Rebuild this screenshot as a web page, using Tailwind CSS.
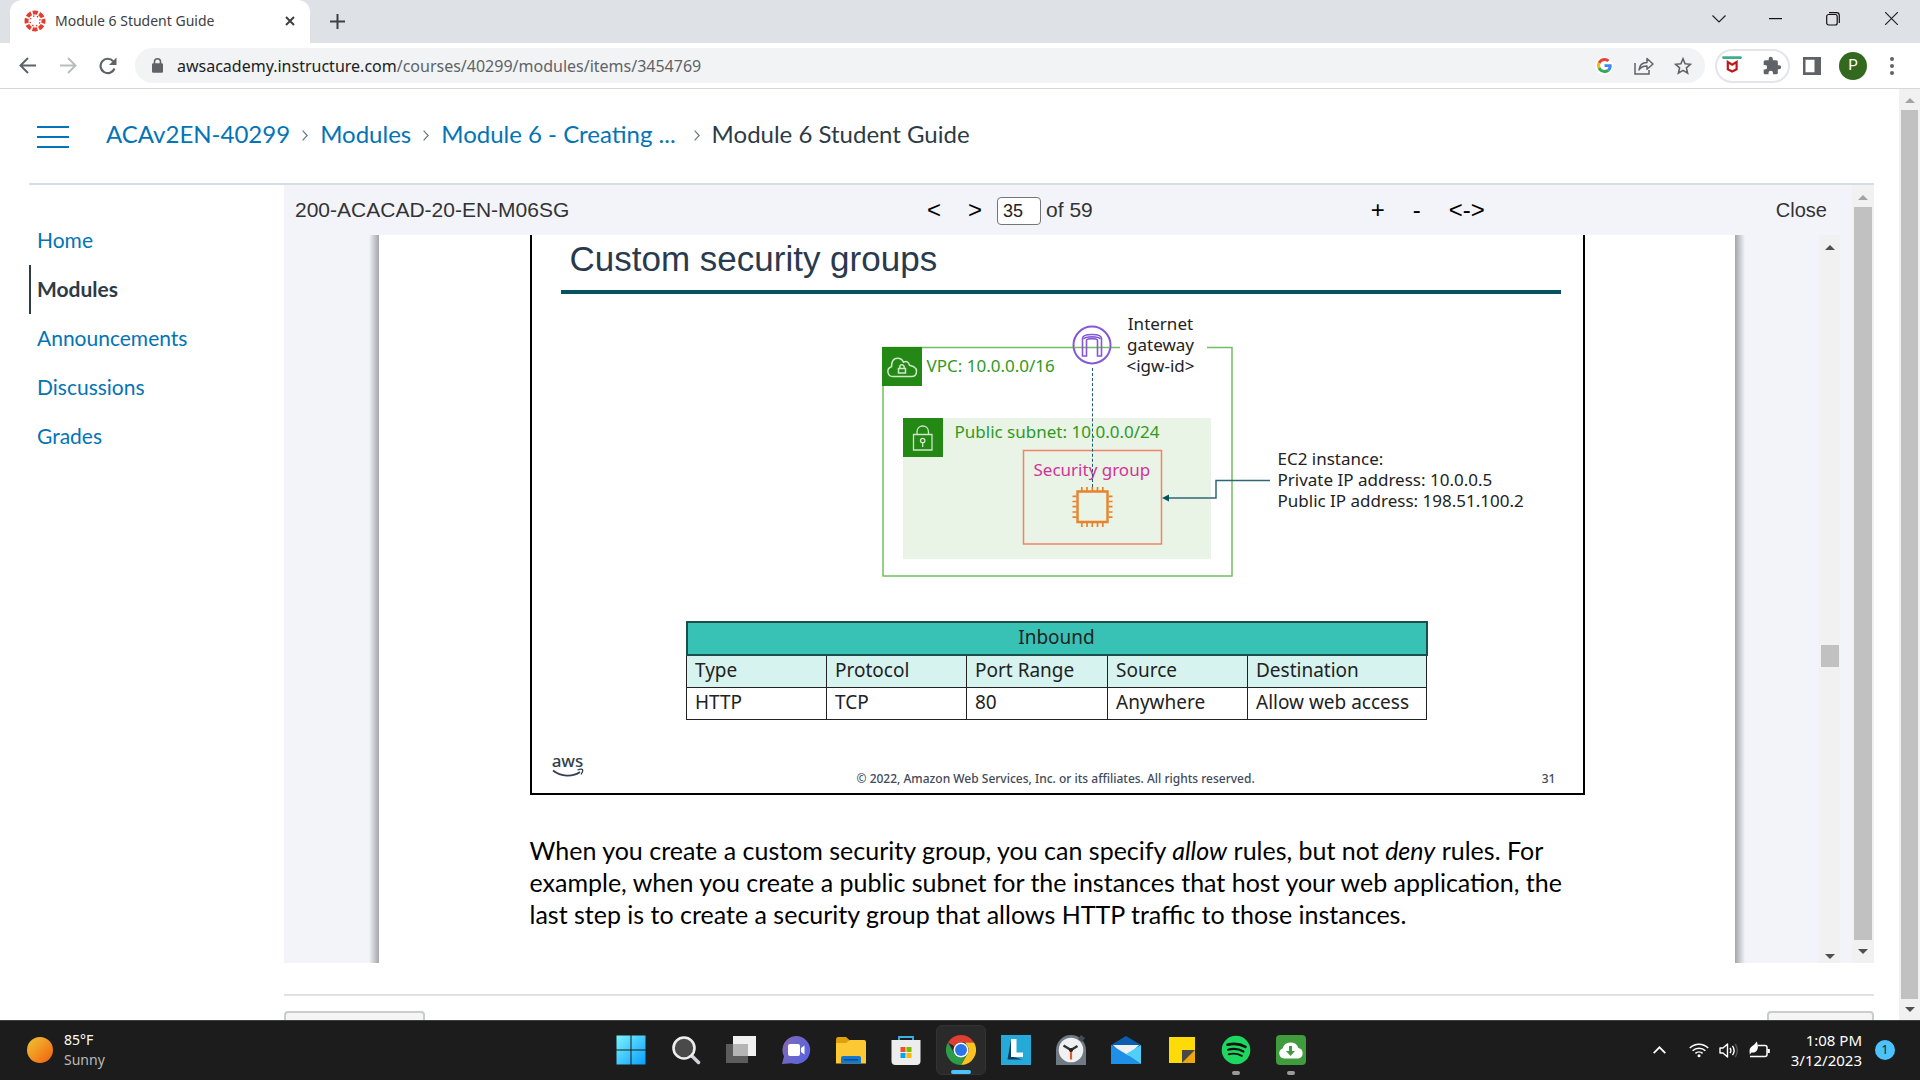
<!DOCTYPE html>
<html lang="en">
<head>
<meta charset="utf-8">
<title>Module 6 Student Guide</title>
<script src="https://cdn.jsdelivr.net/npm/@tailwindcss/browser@4"></script>
</head>
<body class="flex h-screen flex-col overflow-hidden bg-white font-['Noto_Sans','Open_Sans',sans-serif] text-[#202124]">

<!-- Tab strip -->
<header class="shrink-0">
  <div class="flex h-[43px] bg-[#dee1e6] pl-[10px]">
    <div class="flex w-[300px] items-center rounded-t-xl bg-white pr-[12px] pb-[2px] pl-[14px]">
      <svg class="size-[22px]" viewBox="0 0 22 22" fill="none">
        <circle cx="11" cy="11" r="8.5" stroke="#e43d30" stroke-width="4" stroke-dasharray="5 1.68" stroke-dashoffset="2.5"/>
        <circle cx="11" cy="11" r="5" stroke="#e43d30" stroke-width="1.4" stroke-dasharray="1.4 2.53" stroke-dashoffset="-1.3"/>
      </svg>
      <span class="ml-[9px] flex-1 text-[14px] text-[#3c4043]">Module 6 Student Guide</span>
      <button aria-label="Close tab" class="grid size-4 place-items-center"><svg class="size-[10px]" viewBox="0 0 10 10" stroke="#3c4043" stroke-width="2"><path d="M1 1l8 8M9 1L1 9"/></svg></button>
    </div>
    <button aria-label="New tab" class="ml-[19px] grid w-4 place-items-center"><svg class="size-[15px]" viewBox="0 0 15 15" stroke="#3c4043" stroke-width="2"><path d="M7.500 0v15M0 7.500h15"/></svg></button>
    <div class="ml-auto flex h-[37px]">
      <button aria-label="Search tabs" class="grid w-[57px] place-items-center"><svg class="h-[8px] w-[14px]" viewBox="0 0 14 8" fill="none" stroke="#222" stroke-width="1.200"><path d="M.5.5L7 7l6.500-6.500"/></svg></button>
      <button aria-label="Minimize" class="grid w-[57px] place-items-center"><svg class="h-[2px] w-[13px]" viewBox="0 0 13 2"><path fill="#111" d="M0 0h13v1.200H0z"/></svg></button>
      <button aria-label="Restore" class="grid w-[58px] place-items-center"><svg class="size-[14px]" viewBox="0 0 14 14" fill="none" stroke="#111" stroke-width="1.200"><rect x=".7" y="2.500" width="10.500" height="10.500" rx="2"/><path d="M3 .7h7.500a2.800 2.800 0 0 1 2.800 2.800V11"/></svg></button>
      <button aria-label="Close window" class="grid w-[58px] place-items-center"><svg class="size-[13px]" viewBox="0 0 13 13" stroke="#222" stroke-width="1.200"><path d="M0 0l13 13M13 0L0 13"/></svg></button>
    </div>
  </div>
  <!-- Address bar -->
  <div class="flex h-[46px] items-center border-b border-[#d5d7da] pl-[18px]">
    <button aria-label="Back" class="grid size-[18px] place-items-center"><svg class="size-[17px]" viewBox="0 0 17 17" fill="none" stroke="#5f6368" stroke-width="2"><path d="M17 8.500H2M9 1L1.500 8.500 9 16"/></svg></button>
    <button aria-label="Forward" class="ml-[23px] grid size-[18px] place-items-center"><svg class="size-[17px]" viewBox="0 0 17 17" fill="none" stroke="#babcbe" stroke-width="2"><path d="M0 8.500h15M8 1l7.500 7.500L8 16"/></svg></button>
    <button aria-label="Reload" class="ml-[22px] grid size-[18px] place-items-center"><svg class="size-[18px]" viewBox="0 0 18 18" fill="none" stroke="#5f6368" stroke-width="2.200"><path d="M15.500 11.500A7.200 7.200 0 1 1 14.200 4.200"/><path fill="#5f6368" stroke="none" d="M17.500.5v7.500H10z"/></svg></button>
    <div class="ml-[18px] flex h-[35px] flex-1 items-center rounded-full bg-[#f1f3f4] pr-[13px] pl-[17px]">
      <svg class="h-[15px] w-[11px]" viewBox="0 0 11 15"><path fill="#5f6368" d="M1.200 5.300h8.600A1.200 1.200 0 0 1 11 6.500v7a1.200 1.200 0 0 1-1.200 1.200H1.200A1.200 1.200 0 0 1 0 13.500v-7a1.200 1.200 0 0 1 1.200-1.200z"/><path fill="none" stroke="#5f6368" stroke-width="1.600" d="M2.500 6V3.800a3 3 0 0 1 6 0V6"/></svg>
      <a href="#" class="ml-[14px] flex-1 text-[16px] text-[#5f6368]"><span class="text-[#202124]">awsacademy.instructure.com</span>/courses/40299/modules/items/3454769</a>
      <button aria-label="Google" class="grid size-[18px] place-items-center rounded-full bg-white"><svg class="size-[15px]" viewBox="0 0 48 48"><path fill="#EA4335" d="M24 9.500c3.540 0 6.710 1.220 9.210 3.600l6.850-6.850C35.900 2.380 30.470 0 24 0 14.620 0 6.510 5.380 2.560 13.220l7.980 6.190C12.430 13.720 17.740 9.500 24 9.500z"/><path fill="#4285F4" d="M46.980 24.550c0-1.570-.15-3.090-.38-4.550H24v9.020h12.940c-.58 2.960-2.260 5.480-4.780 7.180l7.730 6c4.510-4.180 7.090-10.360 7.090-17.650z"/><path fill="#FBBC05" d="M10.530 28.590a14.500 14.500 0 0 1 0-9.180l-7.980-6.190a24 24 0 0 0 0 21.560z"/><path fill="#34A853" d="M24 48c6.480 0 11.930-2.130 15.890-5.810l-7.730-6c-2.150 1.450-4.920 2.300-8.160 2.300-6.260 0-11.570-4.220-13.470-9.910l-7.980 6.190C6.510 42.620 14.620 48 24 48z"/></svg></button>
      <button aria-label="Share" class="ml-[21px] grid size-[20px] place-items-center"><svg class="h-[18px] w-[20px]" viewBox="0 0 20 18" fill="none" stroke="#5f6368" stroke-width="1.500"><path d="M1 6v11h14v-4"/><path stroke-linejoin="round" d="M5 13c.5-5 3.500-7.500 8-7.500V1.500L19 7l-6 5.300V9c-4 0-6.300 1-8 4z"/></svg></button>
      <button aria-label="Bookmark" class="ml-[20px] grid size-[18px] place-items-center"><svg class="size-[18px]" viewBox="0 0 18 18" fill="none" stroke="#5f6368" stroke-width="1.600"><path d="M9 1.800l2.100 5 5.400.5-4.100 3.600 1.200 5.300L9 13.400l-4.600 2.800 1.200-5.300L1.500 7.300l5.400-.5z"/></svg></button>
    </div>
    <div class="mx-[10px] flex h-[34px] w-[75px] items-center justify-between rounded-full border-2 border-[#e3e5e8] pr-[6px] pl-[5px]">
      <svg class="size-[20px]" viewBox="0 0 20 20" fill="none"><path stroke="#3fae8c" stroke-width="2.800" stroke-linecap="round" d="M1.500 1.600h17"/><path stroke="#c01818" stroke-width="2.200" d="M5.800 6v7.200l4.400 2.200 4.400-2.200V6l-4.400 2.700z"/></svg>
      <svg class="size-[20px]" viewBox="0 0 24 24" fill="#5f6368"><path d="M20.500 11H19V7c0-1.100-.9-2-2-2h-4V3.500a2.500 2.500 0 0 0-5 0V5H4c-1.100 0-2 .9-2 2v3.800h1.500a2.700 2.700 0 0 1 0 5.400H2V20c0 1.100.9 2 2 2h3.800v-1.500a2.700 2.700 0 0 1 5.400 0V22H17c1.100 0 2-.9 2-2v-4h1.500a2.500 2.500 0 0 0 0-5z"/></svg>
    </div>
    <button aria-label="Side panel" class="ml-[3px] grid size-[18px] place-items-center"><svg class="size-[18px]" viewBox="0 0 18 18"><path fill="#5f6368" fill-rule="evenodd" d="M0 0h18v18H0zM2.500 2.800v12.400h9V2.800z"/></svg></button>
    <button class="ml-[18px] grid size-[28px] place-items-center rounded-full bg-[#33691e] font-['Roboto',sans-serif] text-[15px] text-white">P</button>
    <button aria-label="Menu" class="mr-[23px] ml-[20px] flex w-[10px] flex-col items-center gap-[3px]"><span class="size-[4px] rounded-full bg-[#5f6368]"></span><span class="size-[4px] rounded-full bg-[#5f6368]"></span><span class="size-[4px] rounded-full bg-[#5f6368]"></span></button>
  </div>
</header>

<!-- Web page -->
<div class="flex min-h-0 flex-1">
  <div class="flex min-w-0 flex-1 flex-col pr-[25px] pl-[29px]">
    <div class="flex h-[96px] shrink-0 items-center border-b-2 border-[#d7dde1] pl-[8px] font-['Lato',sans-serif] text-[24px]">
      <button aria-label="Course navigation menu" class="flex w-[32px] flex-col gap-[8px] pt-[2px]"><span class="h-[2px] bg-[#0374b5]"></span><span class="h-[2px] bg-[#0374b5]"></span><span class="h-[2px] bg-[#0374b5]"></span></button>
      <nav aria-label="Breadcrumb" class="ml-[37px] flex items-center gap-[12px] pb-[5px] text-[#0374b5]">
        <a href="#">ACAv2EN-40299</a>
        <svg class="mt-[4px] h-[11px] w-[6px]" viewBox="0 0 6 11" fill="none" stroke="#6b7780" stroke-width="1.200"><path d="M.6.6L5.200 5.500.6 10.400"/></svg>
        <a href="#">Modules</a>
        <svg class="mt-[4px] h-[11px] w-[6px]" viewBox="0 0 6 11" fill="none" stroke="#6b7780" stroke-width="1.200"><path d="M.6.6L5.200 5.500.6 10.400"/></svg>
        <a href="#" class="pr-[6px]">Module 6 - Creating ...</a>
        <svg class="mt-[4px] h-[11px] w-[6px]" viewBox="0 0 6 11" fill="none" stroke="#6b7780" stroke-width="1.200"><path d="M.6.6L5.200 5.500.6 10.400"/></svg>
        <span class="text-[#2d3b45]">Module 6 Student Guide</span>
      </nav>
    </div>

    <div class="flex min-h-0 flex-1">
      <nav aria-label="Course" class="w-[255px] shrink-0 pt-[32px] font-['Lato',sans-serif] text-[21px] text-[#0374b5]">
        <a href="#" class="flex h-[48px] items-center border-l-2 border-transparent pb-[2px] pl-[6px]">Home</a>
        <a href="#" class="flex h-[49px] items-center border-l-2 border-[#2d3b45] pb-[2px] pl-[6px] font-bold text-[#2d3b45]">Modules</a>
        <a href="#" class="flex h-[49px] items-center border-l-2 border-transparent pb-[2px] pl-[6px]">Announcements</a>
        <a href="#" class="flex h-[49px] items-center border-l-2 border-transparent pb-[2px] pl-[6px]">Discussions</a>
        <a href="#" class="flex h-[49px] items-center border-l-2 border-transparent pb-[2px] pl-[6px]">Grades</a>
      </nav>

      <div class="flex min-w-0 flex-1 flex-col">
        <div class="flex min-h-0 flex-1 bg-[#f3f4f9]">
          <!-- Document viewer -->
          <main class="flex min-w-0 flex-1 flex-col">
            <div class="flex h-[50px] shrink-0 items-center pr-[13px] pl-[11px] font-['Liberation_Sans',sans-serif] text-[21px] text-[#333]">
              <span class="w-[632px]">200-ACACAD-20-EN-M06SG</span>
              <button aria-label="Previous page" class="text-[24px] text-black">&lt;</button>
              <button aria-label="Next page" class="ml-[27px] text-[24px] text-black">&gt;</button>
              <input aria-label="Page" value="35" class="mt-[2px] ml-[15px] h-[28px] w-[44px] rounded-sm border border-[#767676] bg-white pl-[5px] text-[18px] text-[#222]">
              <span class="ml-[5px]">of 59</span>
              <div class="mr-[291px] ml-auto flex gap-[28px] text-[24px] text-black">
                <button aria-label="Zoom in">+</button>
                <button aria-label="Zoom out">-</button>
                <button aria-label="Fit width">&lt;-&gt;</button>
              </div>
              <button class="text-[20px]">Close</button>
            </div>
            <div class="flex min-h-0 flex-1 overflow-hidden">
              <div class="ml-[85px] w-[10px] bg-linear-to-r from-[#f3f4f9] to-[#a4a5a9]"></div>
              <article class="flex-1 bg-white">
                <!-- Slide -->
                <section class="mx-auto flex h-[560px] w-[1055px] flex-col border-x-2 border-b-2 border-black font-['Noto_Sans',sans-serif]">
                  <h1 class="mr-[22px] ml-[29px] flex h-[59px] items-center border-b-4 border-[#04535f] px-[9px] pb-[7px] font-['Liberation_Sans',sans-serif] text-[35px] text-[#2a3a4e]">Custom security groups</h1>
                  <!-- Network diagram -->
                  <div class="relative h-[327px] text-[17px] leading-[21px]">
                    <svg class="absolute top-0 left-0 h-[328px] w-[1051px]" viewBox="532 294 1051 328" fill="none">
                      <path stroke="#74bd62" stroke-width="1.500" d="M1120 347.500H883V576h349V347.500h-25"/>
                      <path fill="#248814" d="M882 347h40v39h-40z"/>
                      <g stroke="#cfe6cb" stroke-width="1.500"><path d="M893 376.500a5 5 0 0 1-1.500-9.800c0-6 2.500-8.500 6-8.500 3 0 5 1.500 6 4 3-1.500 5-.5 6 3 3.500 1 7 2 7 6s-2.500 5.300-5 5.300z"/><path d="M898.500 368.500h7v4.500h-7zM899.800 368.500v-1.500a2.200 2.200 0 0 1 4.400 0v1.500"/></g>
                      <path fill="#e9f3e6" d="M903 418h308v141H903z"/>
                      <path fill="#248814" d="M903 418h40v39h-40z"/>
                      <g stroke="#cfe6cb" stroke-width="1.300"><path d="M913.500 434.500h18.500V450h-18.500z"/><path d="M917 434.500v-2.500c0-8 11.500-8 11.500 0v2.500"/><circle cx="922.700" cy="440.500" r="2.200"/><path d="M922.700 443v4"/></g>
                      <path stroke="#ef8468" stroke-width="1.500" d="M1023.500 450.500h138V544h-138z"/>
                      <g stroke="#8458d8" stroke-width="2"><circle cx="1092" cy="345" r="18.500" fill="#fff"/></g>
                      <path stroke="#74bd62" stroke-width="1.500" d="M1074 347.500h36"/>
                      <path stroke="#8458d8" stroke-width="1.600" d="M1082.500 356v-17.500c0-3 3.500-4 9.500-4s9.500 1 9.500 4V356h-4v-15.500c0-2.500-11-2.500-11 0V356zM1084 339c1-3 15-3 16 0"/>
                      <g stroke="#e8832b"><path stroke-width="2.400" d="M1077.500 491.500h30V522h-30z"/><path stroke-width="1.700" d="M1081.800 487v4M1087 487v4M1092.300 487v4M1097.500 487v4M1102.800 487v4M1081.800 523v4M1087 523v4M1092.300 523v4M1097.500 523v4M1102.800 523v4M1072.500 496.300h4M1072.500 501.500h4M1072.500 506.700h4M1072.500 512h4M1072.500 517.200h4M1108.500 496.300h4M1108.500 501.500h4M1108.500 506.700h4M1108.500 512h4M1108.500 517.200h4"/></g>
                      <path stroke="#2f6875" stroke-width="1.500" d="M1270 480.500h-54V498h-49"/><path fill="#04535f" d="M1162 498l7-3.500v7z"/>
                    </svg>
                    <p class="absolute top-[19px] left-[595px] text-center text-[#222]">Internet<br>gateway<br>&lt;igw-id&gt;</p>
                    <p class="absolute top-[61px] left-[395px] text-[#2f9a1e]">VPC: 10.0.0.0/16</p>
                    <p class="absolute top-[127px] left-[423px] text-[#2f9a1e]">Public subnet: 10.0.0.0/24</p>
                    <p class="absolute top-[165px] left-[502px] text-[#d2329a]">Security group</p>
                    <p class="absolute top-[154px] left-[746px] text-[#222]">EC2 instance:<br>Private IP address: 10.0.0.5<br>Public IP address: 198.51.100.2</p>
                    <div class="absolute top-[74px] left-[560px] h-[119px] border-l border-dashed border-[#1d5b6a]"></div>
                  </div>
                  <table class="ml-[154px] w-[742px] table-fixed border-collapse text-left text-[19px] text-[#222]">
                    <colgroup><col class="w-[140px]"><col class="w-[140px]"><col class="w-[141px]"><col class="w-[140px]"><col></colgroup>
                    <thead>
                      <tr class="h-[33px] bg-[#37c2b5]"><th colspan="5" class="border-2 border-[#1b4f4c] p-0 pb-[2px] text-center font-normal leading-none">Inbound</th></tr>
                      <tr class="h-[32px] bg-[#d6f3f0]"><th class="border border-[#222] p-0 pb-[2px] pl-2 font-normal leading-none">Type</th><th class="border border-[#222] p-0 pb-[2px] pl-2 font-normal leading-none">Protocol</th><th class="border border-[#222] p-0 pb-[2px] pl-2 font-normal leading-none">Port Range</th><th class="border border-[#222] p-0 pb-[2px] pl-2 font-normal leading-none">Source</th><th class="border border-[#222] p-0 pb-[2px] pl-2 font-normal leading-none">Destination</th></tr>
                    </thead>
                    <tbody>
                      <tr class="h-[32px]"><td class="border border-[#222] p-0 pb-[2px] pl-2 leading-none">HTTP</td><td class="border border-[#222] p-0 pb-[2px] pl-2 leading-none">TCP</td><td class="border border-[#222] p-0 pb-[2px] pl-2 leading-none">80</td><td class="border border-[#222] p-0 pb-[2px] pl-2 leading-none">Anywhere</td><td class="border border-[#222] p-0 pb-[2px] pl-2 leading-none">Allow web access</td></tr>
                    </tbody>
                  </table>
                  <footer class="mt-auto flex h-[39px] items-start justify-between pr-[27px] pl-[20px] text-[12px] font-medium text-[#414a58]">
                    <div class="flex w-[32px] flex-col items-center">
                      <span class="text-[17px] leading-[14px] font-medium text-[#333f50]">aws</span>
                      <svg class="h-[9px] w-[32px]" viewBox="0 0 32 9" fill="none" stroke="#333f50" stroke-width="1.800"><path d="M1 2.500c8 6.500 20 6.500 27 1.500"/><path stroke-width="1.300" d="M25.500 2c2-.8 4.500-1 5-.3s-.3 3-1.500 4.800"/></svg>
                    </div>
                    <p class="pt-[17px] pr-[14px] leading-[16px]">© 2022, Amazon Web Services, Inc. or its affiliates. All rights reserved.</p>
                    <span class="pt-[17px] leading-[16px]">31</span>
                  </footer>
                </section>
                <p class="mx-auto w-[1055px] pt-[39px] font-['Lato',sans-serif] text-[25px] leading-[32px] whitespace-nowrap text-black">When you create a custom security group, you can specify <em>allow</em> rules, but not <em>deny</em> rules. For<br>example, when you create a public subnet for the instances that host your web application, the<br>last step is to create a security group that allows HTTP traffic to those instances.</p>
              </article>
              <div class="mr-[74px] w-[10px] bg-linear-to-r from-[#a4a5a9] to-[#f3f4f9]"></div>
              <div class="flex w-[21px] flex-col items-center bg-[#f1f1f1]">
                <svg class="mt-[10px] h-[5px] w-[10px]" viewBox="0 0 10 5"><path fill="#505050" d="M0 5l5-5 5 5z"/></svg>
                <div class="mt-[395px] h-[22px] w-[18px] bg-[#c1c1c1]"></div>
                <svg class="mt-auto mb-[4px] h-[5px] w-[10px]" viewBox="0 0 10 5"><path fill="#505050" d="M0 0l5 5 5-5z"/></svg>
              </div>
            </div>
          </main>
          <div class="ml-[12px] flex w-[22px] flex-col items-center bg-[#f1f1f1]">
            <svg class="mt-[10px] h-[5px] w-[10px]" viewBox="0 0 10 5"><path fill="#a3a3a3" d="M0 5l5-5 5 5z"/></svg>
            <div class="mt-[7px] w-[18px] flex-1 bg-[#c1c1c1]"></div>
            <svg class="mt-[9px] mb-[9px] h-[5px] w-[10px]" viewBox="0 0 10 5"><path fill="#505050" d="M0 0l5 5 5-5z"/></svg>
          </div>
        </div>
        <!-- Module item footer -->
        <div class="mt-[31px] flex h-[26px] shrink-0 items-start justify-between overflow-hidden border-t-2 border-[#dfe2e5] pt-[15px]">
          <button aria-label="Previous" class="h-[48px] w-[141px] shrink-0 rounded-sm border-2 border-[#c7cdd1] bg-[#f5f5f5]"></button>
          <button aria-label="Next" class="h-[48px] w-[107px] shrink-0 rounded-sm border-2 border-[#c7cdd1] bg-[#f5f5f5]"></button>
        </div>
      </div>
    </div>
  </div>
  <div class="flex w-[21px] flex-col items-center bg-[#f1f1f1]">
    <svg class="mt-[9px] h-[5px] w-[10px]" viewBox="0 0 10 5"><path fill="#a3a3a3" d="M0 5l5-5 5 5z"/></svg>
    <div class="mt-[7px] w-[17px] flex-1 bg-[#c1c1c1]"></div>
    <svg class="mt-[8px] mb-[8px] h-[5px] w-[10px]" viewBox="0 0 10 5"><path fill="#505050" d="M0 0l5 5 5-5z"/></svg>
  </div>
</div>

<!-- Taskbar -->
<footer class="grid h-[60px] shrink-0 grid-cols-[1fr_auto_1fr] items-center border-t border-[#3b403f] bg-[#1c1c1c] pb-px text-[15px] leading-[20px] text-white">
  <div class="flex items-center pl-[27px]">
    <span class="size-[26px] rounded-full bg-linear-to-br from-[#ecc535] to-[#ef5a08]"></span>
    <p class="ml-[11px] text-[14px]">85°F<br><span class="text-[#b9b9b9]">Sunny</span></p>
  </div>
  <div class="flex gap-[5px] pl-px">
    <button aria-label="Start" class="grid h-[50px] w-[50px] place-items-center"><svg class="size-[30px]" viewBox="0 0 30 30"><defs><linearGradient id="win" x1="0" y1="0" x2="1" y2="1" gradientUnits="objectBoundingBox"><stop stop-color="#7bf3ff"/><stop offset="1" stop-color="#0a9dfc"/></linearGradient></defs><path fill="url(#win)" d="M.5.5h14v14H.5zM15.500.5h14v14h-14zM.5 15.500h14v14H.5zM15.500 15.500h14v14h-14z"/></svg></button>
    <button aria-label="Search" class="grid h-[50px] w-[50px] place-items-center"><svg class="size-[30px]" viewBox="0 0 30 30" fill="none"><path stroke="#cfd3d8" stroke-width="3.500" stroke-linecap="round" d="M21 21l6.500 6.500"/><circle cx="13" cy="13" r="10.500" fill="#4a4a4a" stroke="#eceeef" stroke-width="2.600"/></svg></button>
    <button aria-label="Task view" class="grid h-[50px] w-[50px] place-items-center"><svg class="size-[30px]" viewBox="0 0 30 30"><path fill="#5c5c5c" d="M0 9h22v19H0z"/><path fill="#f1f1f1" d="M7 1h23v20H7z"/><path fill="#b5b5b5" d="M7 9h15v12H7z"/></svg></button>
    <button aria-label="Chat" class="grid h-[50px] w-[50px] place-items-center"><svg class="size-[30px]" viewBox="0 0 30 30"><defs><linearGradient id="chat" x1="0" y1="0" x2="1" y2=".5"><stop stop-color="#8f63b4"/><stop offset=".5" stop-color="#6c68c8"/><stop offset="1" stop-color="#5c63dd"/></linearGradient></defs><path fill="url(#chat)" d="M15 1a14 14 0 1 1-4.500 27.200L1 29l2-7.500A14 14 0 0 1 15 1z"/><rect x="7" y="9" width="12" height="12" rx="2" fill="#fff"/><path fill="#fff" d="M20 13l3.500-2.500v9L20 17z"/></svg></button>
    <button aria-label="File Explorer" class="grid h-[50px] w-[50px] place-items-center"><svg class="size-[30px]" viewBox="0 0 30 30"><path fill="#e0a00c" d="M0 4.500Q0 2 2 2h8l4 3.500V12H0z"/><path fill="#fcc934" d="M0 8h10l4-3h14q2 0 2 2v21.500H0z"/><path fill="#1478d0" d="M5 28.500V23q0-2 2-2h16q2 0 2 2v5.500z"/><path fill="#0b4d94" d="M8 24h14v1.500H8z"/></svg></button>
    <button aria-label="Microsoft Store" class="grid h-[50px] w-[50px] place-items-center"><svg class="size-[30px]" viewBox="0 0 30 30"><path fill="none" stroke="#36b4ea" stroke-width="1.800" d="M8 6V2h14v4"/><path fill="#ededed" d="M.5 5h29v21q0 4-4 4h-21q-4 0-4-4z"/><path fill="#f25022" d="M9.500 12h5v5h-5z"/><path fill="#7fba00" d="M15.500 12h5v5h-5z"/><path fill="#00a4ef" d="M9.500 18h5v5h-5z"/><path fill="#ffb900" d="M15.500 18h5v5h-5z"/></svg></button>
    <button aria-label="Chrome" class="relative grid h-[50px] w-[50px] place-items-center rounded-md border border-[#333] bg-[#2a2a2a]"><svg class="size-[30px]" viewBox="0 0 30 30"><path fill="#dd4033" d="M15 0a15 15 0 0 1 13 7.500H15a7.500 7.500 0 0 0-6.500 3.750L2 7.500A15 15 0 0 1 15 0z"/><path fill="#fcc31e" d="M28 7.500A15 15 0 0 1 15 30l6.500-11.250A7.500 7.500 0 0 0 21.500 11L19 7.500z"/><path fill="#2d9c48" d="M2 7.500l6.500 11.250A7.500 7.500 0 0 0 15 22.500a7.500 7.500 0 0 0 6.500-3.750L15 30A15 15 0 0 1 2 7.500z"/><circle cx="15" cy="15" r="7.500" fill="#fff"/><circle cx="15" cy="15" r="6" fill="#2b75e8"/></svg><span class="absolute bottom-0 h-[4px] w-[20px] rounded-full bg-[#4cc2ff]"></span></button>
    <button aria-label="Lenovo" class="grid h-[50px] w-[50px] place-items-center"><svg class="size-[30px]" viewBox="0 0 30 30"><path fill="#25a9d8" d="M0 0h30v30H0z"/><path fill="#0c3b66" d="M10 5L6.500 24.500l15 0-11-3z"/><path fill="#fff" d="M10 4h5.500v13.500H22V22H10z"/></svg></button>
    <button aria-label="Clock" class="grid h-[50px] w-[50px] place-items-center"><svg class="size-[30px]" viewBox="0 0 30 30"><path fill="#707a85" d="M15 0a15 15 0 0 1 15 15v15H0V15A15 15 0 0 1 15 0z"/><path fill="#454b52" d="M25 0l4 3-3 4-4-3z"/><circle cx="15" cy="15" r="12.300" fill="#f0f1f2"/><path stroke="#333" stroke-width="2.400" fill="none" d="M7.500 10.500L15 15l6.500-4"/><path stroke="#e4572a" stroke-width="2.200" d="M15 16v8.500"/><circle cx="15" cy="15" r="2" fill="#222"/></svg></button>
    <button aria-label="Mail" class="grid h-[50px] w-[50px] place-items-center"><svg class="size-[30px]" viewBox="0 0 30 30"><path fill="#0c5cb0" d="M0 10L15 1l15 9v5H0z"/><path fill="#f0f0f0" d="M2 10h26l-13 13z"/><path fill="#1e90e8" d="M0 10l15 9L30 29H0z"/><path fill="#4fd0fb" d="M30 10v19L15 19z"/></svg></button>
    <button aria-label="Sticky Notes" class="grid h-[50px] w-[50px] place-items-center"><svg class="size-[30px]" viewBox="0 0 30 30"><path fill="#fedb06" d="M3 2h26v13L16 28H3z"/><path fill="#484848" d="M16 15h13L16 28z"/><path fill="#eda80c" d="M29 15v13H16z"/></svg></button>
    <button aria-label="Spotify" class="relative grid h-[50px] w-[50px] place-items-center"><svg class="size-[30px]" viewBox="0 0 30 30" fill="none" stroke="#101010" stroke-linecap="round"><circle cx="15" cy="15" r="14.300" fill="#1ed760" stroke="none"/><path stroke-width="2.600" d="M6.500 9.800c6-1.500 12.500-1 18 2"/><path stroke-width="2.200" d="M7 14.700c5.500-1.400 11-.8 15.500 1.800"/><path stroke-width="1.900" d="M7.800 19.200c4.500-1 9-.6 13 1.700"/></svg><span class="absolute bottom-0 h-[4px] w-[8px] rounded-full bg-[#9a9a9a]"></span></button>
    <button aria-label="Downloader" class="relative grid h-[50px] w-[50px] place-items-center"><svg class="size-[30px]" viewBox="0 0 30 30"><rect width="30" height="30" rx="4" fill="#3f9b3b"/><path fill="#fff" d="M8 23.500a5.200 5.200 0 0 1-1.500-10 8.500 8.500 0 0 1 16-.5 5.400 5.400 0 0 1 0 10.500z"/><path fill="#3f9b3b" d="M13 11h3v5h3l-4.500 5-4.500-5h3z"/></svg><span class="absolute bottom-0 h-[4px] w-[8px] rounded-full bg-[#9a9a9a]"></span></button>
  </div>
  <div class="flex items-center justify-end pr-[25px]">
    <svg class="h-[8px] w-[13px]" viewBox="0 0 13 8" fill="none" stroke="#fff" stroke-width="1.700"><path d="M.7 7.200L6.500 1.300l5.800 5.900"/></svg>
    <svg class="ml-[23px] h-[16px] w-[20px]" viewBox="0 0 20 16" fill="none" stroke="#fff" stroke-width="1.500"><path d="M.8 6a13 13 0 0 1 18.400 0M3.600 8.800a9 9 0 0 1 12.800 0M6.400 11.400a5.200 5.200 0 0 1 7.200 0"/><circle cx="10" cy="13.800" r="1.500" fill="#fff" stroke="none"/></svg>
    <svg class="ml-[10px] h-[17px] w-[20px]" viewBox="0 0 20 17" fill="none" stroke="#fff" stroke-width="1.400"><path stroke-linejoin="round" d="M1 6h3l4.500-4v13L4 11H1z"/><path d="M11 5.800q1.800 2.700 0 5.400M13.500 3.800q3.200 4.700 0 9.400"/><path stroke="#555" d="M16.200 2q4.200 6.500 0 13"/></svg>
    <svg class="ml-[10px] h-[18px] w-[21px]" viewBox="0 0 21 18" fill="none" stroke="#fff" stroke-width="1.500"><path d="M9 4.500h7a2 2 0 0 1 2 2v7a2 2 0 0 1-2 2H4"/><path fill="#fff" stroke="none" d="M18.500 8h2.300v4h-2.300zM7.500.5C9.500 4 9.500 8 7 10.500 5 12 2.500 11.500 2.500 11.500L.8 13.500.5 10C.5 5 5.500 5 7.500.5z"/><path d="M1 15.500h3"/></svg>
    <p class="ml-[21px] text-right">1:08 PM<br>3/12/2023</p>
    <button class="ml-[13px] grid size-[20px] place-items-center rounded-full bg-[#4cc2ff] text-[12px] leading-none text-[#1c1c1c]">1</button>
  </div>
</footer>
</body>
</html>
